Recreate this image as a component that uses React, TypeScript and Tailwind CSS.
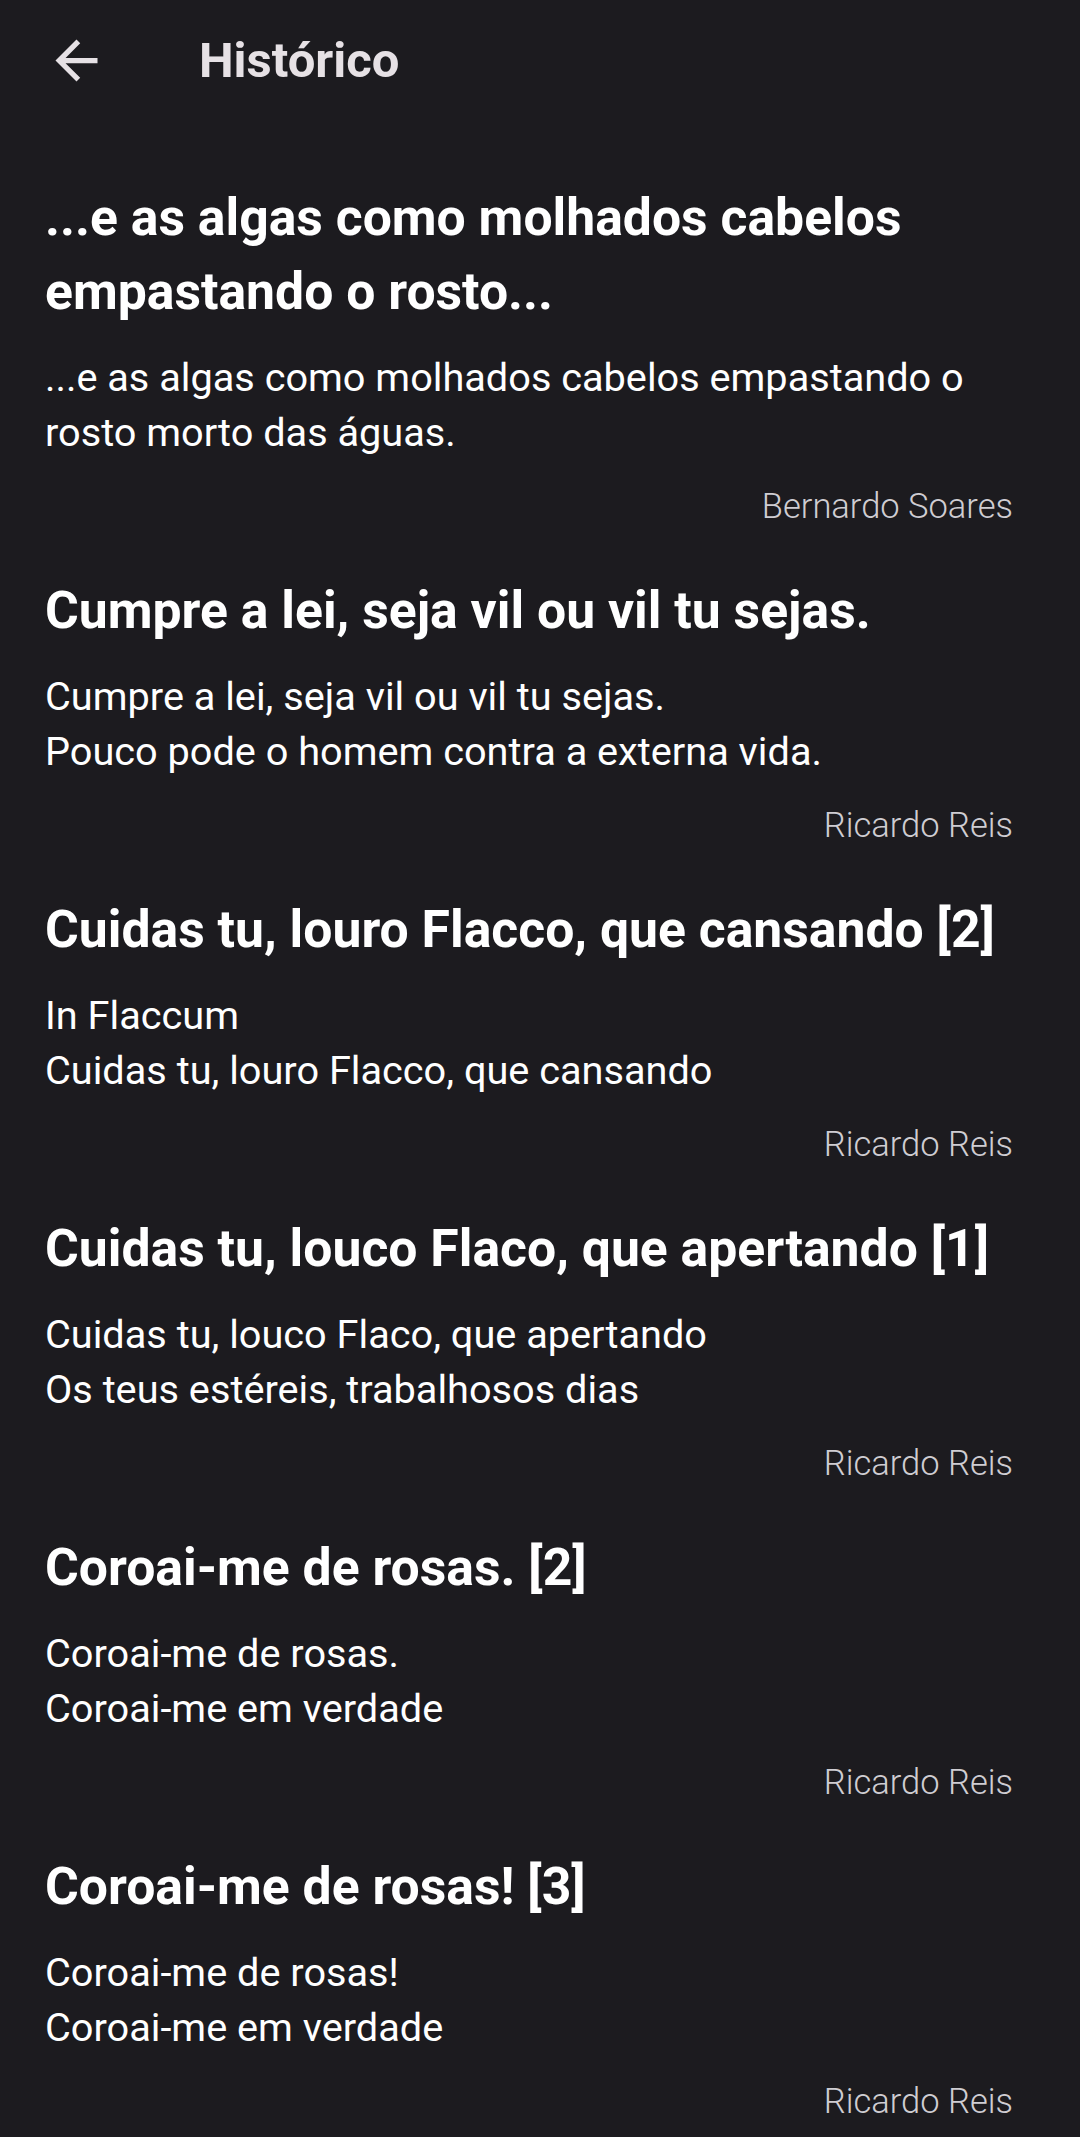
const items = [
    {
        title: "...e as algas como molhados cabelos empastando o rosto...",
        body: ["...e as algas como molhados cabelos empastando o rosto morto das águas."],
        author: "Bernardo Soares",
    },
    {
        title: "Cumpre a lei, seja vil ou vil tu sejas.",
        body: ["Cumpre a lei, seja vil ou vil tu sejas.", "Pouco pode o homem contra a externa vida."],
        author: "Ricardo Reis",
    },
    {
        title: "Cuidas tu, louro Flacco, que cansando [2]",
        body: ["In Flaccum", "Cuidas tu, louro Flacco, que cansando"],
        author: "Ricardo Reis",
    },
    {
        title: "Cuidas tu, louco Flaco, que apertando [1]",
        body: ["Cuidas tu, louco Flaco, que apertando", "Os teus estéreis, trabalhosos dias"],
        author: "Ricardo Reis",
    },
    {
        title: "Coroai-me de rosas. [2]",
        body: ["Coroai-me de rosas.", "Coroai-me em verdade"],
        author: "Ricardo Reis",
    },
    {
        title: "Coroai-me de rosas! [3]",
        body: ["Coroai-me de rosas!", "Coroai-me em verdade"],
        author: "Ricardo Reis",
    },
]

const BackArrow = () => (
    <svg width="63" height="63" viewBox="0 0 24 24" fill="#e6e1e5">
        <path d="M20 11H7.83l5.59-5.59L12 4l-8 8 8 8 1.41-1.41L7.83 13H20v-2z" />
    </svg>
)

const App = () => {
    return (
        <div
            className="h-[2137px] overflow-hidden bg-[#1c1b1f]"
            style={{fontFamily: "Roboto, 'Noto Sans', sans-serif"}}
        >
            <header className="h-[120px] flex items-center pl-[45px]">
                <button className="w-[63px] h-[63px] flex items-center justify-center">
                    <BackArrow />
                </button>
                <h1 className="ml-[91px] text-[49px] font-bold text-[#e6e1e5] leading-none">Histórico</h1>
            </header>

            <ul className="pt-[61px] pl-[45px] pr-[67px]">
                {items.map((item, i) => (
                    <li key={i} className="pb-[46px]">
                        <h2 className="text-[51.7px] leading-[74px] font-bold text-white">{item.title}</h2>
                        <div className="mt-[21px] text-[39.7px] leading-[55px] text-white">
                            {item.body.map((line, j) => (
                                <p key={j}>{line}</p>
                            ))}
                        </div>
                        <p className="mt-[24px] text-right text-[34.5px] leading-[44px] font-light text-[#cfcdd2]">
                            {item.author}
                        </p>
                    </li>
                ))}
            </ul>
        </div>
    )
}

export default App
